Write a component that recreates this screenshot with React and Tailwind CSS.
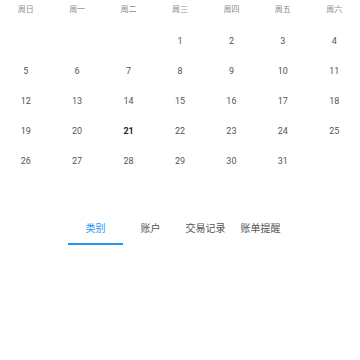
const weekdays = ["周日", "周一", "周二", "周三", "周四", "周五", "周六"];
const tabs = ["类别", "账户", "交易记录", "账单提醒"];

// 1号在周三
const cells = [...Array(3).fill(null), ...Array.from({ length: 31 }, (_, i) => i + 1)];
while (cells.length % 7) cells.push(null);

export default function App() {
  const font = { fontFamily: "Roboto, 'Noto Sans CJK SC', sans-serif" };
  return (
    <div className="w-[360px] h-[360px] bg-white overflow-hidden" style={font}>
      <div className="grid grid-cols-7 h-[20px]">
        {weekdays.map((d) => (
          <div key={d} className="flex items-center justify-center text-[8px] text-[#8a8a8a]">
            {d}
          </div>
        ))}
      </div>
      <div className="grid grid-cols-7 mt-[7px]">
        {cells.map((n, i) => (
          <div
            key={i}
            className={`h-[30px] flex items-center justify-center text-[9px] ${
              n === 21 ? "font-bold text-[#222]" : "text-[#555]"
            }`}
          >
            {n}
          </div>
        ))}
      </div>
      <div className="flex pl-[68px] mt-[37px]">
        {tabs.map((t, i) => (
          <div
            key={t}
            className={`w-[55px] h-[31px] flex items-center justify-center whitespace-nowrap text-[10px] border-b-2 ${
              i === 0 ? "text-[#2196f3] border-[#2196f3]" : "text-[#555] border-transparent"
            }`}
          >
            {t}
          </div>
        ))}
      </div>
    </div>
  );
}
